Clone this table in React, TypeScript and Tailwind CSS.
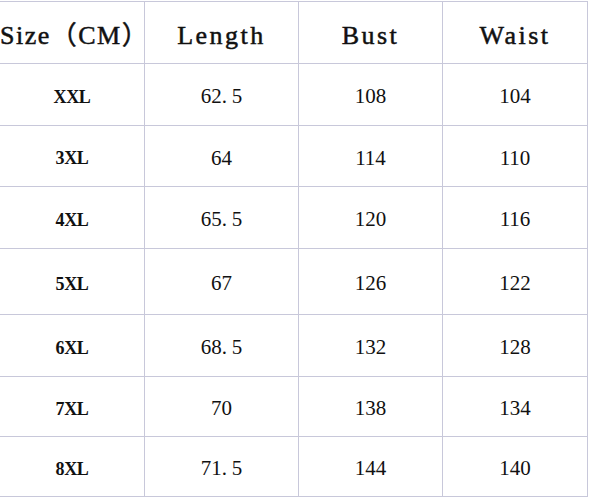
import React from "react"

interface SizeRow {
  size: string
  length: string
  bust: string
  waist: string
  h: string
}

const rows: SizeRow[] = [
  { size: "XXL", length: "62.5", bust: "108", waist: "104", h: "h-[62px]" },
  { size: "3XL", length: "64", bust: "114", waist: "110", h: "h-[61px]" },
  { size: "4XL", length: "65.5", bust: "120", waist: "116", h: "h-[62px]" },
  { size: "5XL", length: "67", bust: "126", waist: "122", h: "h-[66px]" },
  { size: "6XL", length: "68.5", bust: "132", waist: "128", h: "h-[62px]" },
  { size: "7XL", length: "70", bust: "138", waist: "134", h: "h-[60px]" },
  { size: "8XL", length: "71.5", bust: "144", waist: "140", h: "h-[60px]" },
]

const cols = ["w-[145px]", "w-[154px]", "w-[144px]", "w-[145px]"]

// decimal point takes a full digit cell, like the original chart font
function Num({ value }: { value: string }) {
  const [a, b] = value.split(".")
  if (b === undefined) return <>{value}</>
  return (
    <>
      {a}
      <span className="inline-block w-[10px] text-left">.</span>
      {b}
    </>
  )
}

export default function App() {
  const cell = "flex items-center justify-center border-r border-[#c8c8da] pt-[5px]"

  return (
    <div className="w-[591px] h-[500px] bg-white overflow-hidden font-['Liberation_Serif','DejaVu_Serif','Noto_Sans_CJK_SC',serif]">
      <div className="mt-[1px] w-[588px] border-t border-[#c8c8da] text-[#111]">
        {/* header */}
        <div className="flex h-[62px] border-b border-[#c8c8da] text-[26px] [-webkit-text-stroke:0.5px_#111]">
          <div className={`${cols[0]} ${cell} tracking-[1.5px] pt-[6px]`}>Size（CM）</div>
          <div className={`${cols[1]} ${cell} tracking-[2.5px] pt-[6px]`}>Length</div>
          <div className={`${cols[2]} ${cell} tracking-[2.5px] pt-[6px]`}>Bust</div>
          <div className={`${cols[3]} ${cell} tracking-[2.5px] pt-[6px]`}>Waist</div>
        </div>

        {rows.map((r) => (
          <div key={r.size} className={`flex ${r.h} border-b border-[#c8c8da]`}>
            <div className={`${cols[0]} ${cell} text-[18px] font-bold tracking-[-0.3px]`}>{r.size}</div>
            <div className={`${cols[1]} ${cell} text-[21px]`}>
              <Num value={r.length} />
            </div>
            <div className={`${cols[2]} ${cell} text-[21px]`}>{r.bust}</div>
            <div className={`${cols[3]} ${cell} text-[21px]`}>{r.waist}</div>
          </div>
        ))}
      </div>
    </div>
  )
}
